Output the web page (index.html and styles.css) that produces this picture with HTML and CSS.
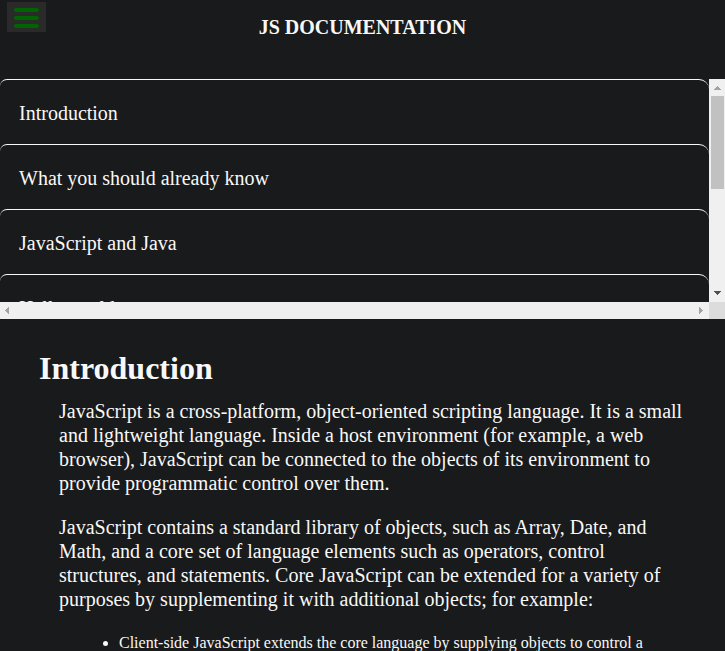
FILE: index.html
```html
<!DOCTYPE html>
<html lang="en">
<head>
<meta charset="utf-8">
<meta name="viewport" content="width=device-width, initial-scale=1">
<title>JS Documentation</title>
<link rel="stylesheet" href="styles.css">
</head>
<body>
<header class="header">
  <button class="menu" type="button" aria-label="Toggle menu">
    <span class="bar"></span>
    <span class="bar"></span>
    <span class="bar"></span>
  </button>
  <h1 class="title">JS DOCUMENTATION</h1>
</header>
<nav class="nav" aria-label="Sections">
  <div class="links">
    <a class="link" href="#introduction">Introduction</a>
    <a class="link" href="#already-know">What you should already know</a>
    <a class="link" href="#javascript-java">JavaScript and Java</a>
    <a class="link" href="#hello-world">Hello world</a>
  </div>
  <div class="track vertical" aria-hidden="true">
    <svg class="arrow" viewBox="0 0 16 17" shape-rendering="crispEdges"><path class="dim" d="M8 7h1v1h1v1h1v1h1v1H5v-1h1V9h1V8h1z"/></svg>
    <div class="thumb"></div>
    <svg class="arrow end" viewBox="0 0 16 17" shape-rendering="crispEdges"><path class="active" d="M5 6h7v1h-1v1h-1v1H9v1H8V9H7V8H6V7H5z"/></svg>
  </div>
  <div class="track horizontal" aria-hidden="true">
    <svg class="arrow" viewBox="0 0 16 17" shape-rendering="crispEdges"><path class="dim" d="M9 5v7H8v-1H7v-1H6V9H5V8h1V7h1V6h1V5z"/></svg>
    <svg class="arrow" viewBox="0 0 16 17" shape-rendering="crispEdges"><path class="dim" d="M6 5v7h1v-1h1v-1h1V9h1V8H9V7H8V6H7V5z"/></svg>
  </div>
  <div class="corner" aria-hidden="true"></div>
</nav>
<main class="content">
  <section id="introduction">
    <h2 class="heading">Introduction</h2>
    <p class="text">JavaScript is a cross-platform, object-oriented scripting language. It is a small and lightweight language. Inside a host environment (for example, a web browser), JavaScript can be connected to the objects of its environment to provide programmatic control over them.</p>
    <p class="text">JavaScript contains a standard library of objects, such as Array, Date, and Math, and a core set of language elements such as operators, control structures, and statements. Core JavaScript can be extended for a variety of purposes by supplementing it with additional objects; for example:</p>
    <ul class="list">
      <li>Client-side JavaScript extends the core language by supplying objects to control a</li>
    </ul>
  </section>
</main>
</body>
</html>
```

FILE: styles.css
```css
* {
  box-sizing: border-box;
}

body {
  display: flex;
  flex-direction: column;
  height: 100vh;
  margin: 0;
  overflow: hidden;
  background: #191a1b;
  color: #f8f8f8;
  font-family: "Liberation Serif", "Times New Roman", serif;
  font-size: 20px;
  line-height: 24px;
}

.header {
  display: grid;
  grid-template-columns: 40px 1fr 40px;
  align-items: start;
  flex: none;
  padding: 2px 7px 33px;
}

.menu {
  display: flex;
  flex-direction: column;
  gap: 4px;
  width: 39px;
  padding: 6px 7px 4px;
  border: 0;
  background: #2a2a2a;
}

.bar {
  width: 25px;
  height: 4px;
  border-radius: 2px;
  background: #006400;
}

.title {
  margin: 0;
  padding: 13px 0 7px;
  font-size: 20px;
  text-align: center;
}

.nav {
  display: grid;
  grid-template: 223px 17px / 1fr 16px;
  flex: none;
}

.links {
  overflow: hidden;
}

.link {
  display: block;
  padding: 21px 19px 19px;
  border-top: 1px solid #f8f8f8;
  border-radius: 7px 10px 10px 7px;
  color: inherit;
  text-decoration: none;
}

.track {
  display: flex;
  background: #f0f0f0;
}

.vertical {
  flex-direction: column;
}

.horizontal {
  justify-content: space-between;
}

.arrow {
  flex: none;
  width: 16px;
  height: 17px;
}

.end {
  margin-top: auto;
}

.thumb {
  height: 93px;
  margin: 0 1px 0 2px;
  background: #c1c1c1;
}

.dim {
  fill: #a3a3a3;
}

.active {
  fill: #505050;
}

.corner {
  background: #dcdcdc;
}

.content {
  flex: 1;
  min-height: 0;
  padding: 31px 39px 0;
}

.heading {
  margin: 0 0 13px;
  font-size: 32px;
  line-height: 36px;
}

.text {
  margin: 0 0 20px;
  padding: 0 0 0 20px;
}

.list {
  margin: 0;
  padding-left: 80px;
  font-size: 16px;
  line-height: 24px;
}
```
